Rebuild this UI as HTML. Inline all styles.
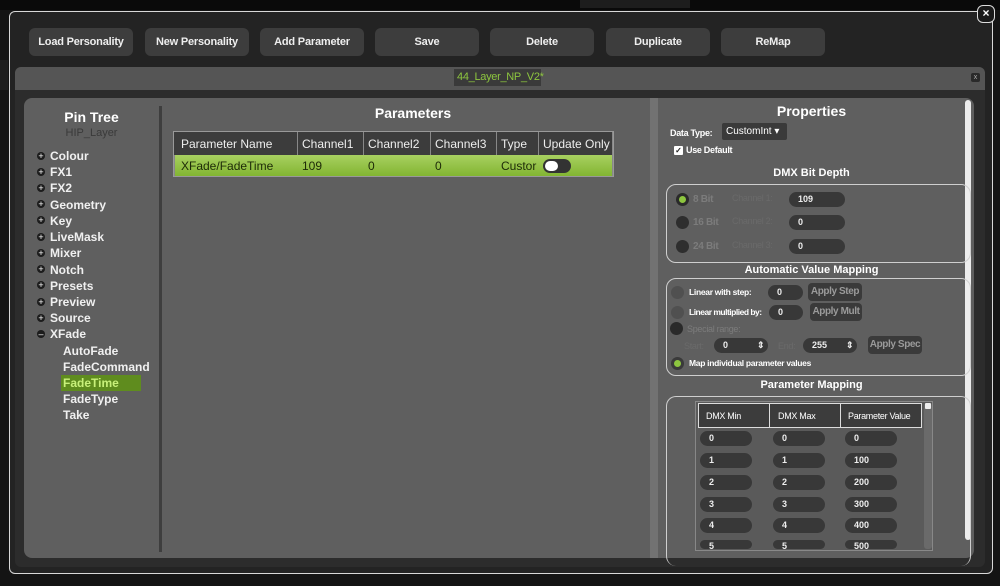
<!DOCTYPE html>
<html><head><meta charset="utf-8"><style>
*{margin:0;padding:0;box-sizing:border-box}
body{width:1000px;height:586px;background:#141414;position:relative;overflow:hidden;font-family:"Liberation Sans",sans-serif;color:#fff}
.a{position:absolute}
.btn{position:absolute;top:28px;height:28px;width:104px;background:#3d3d3d;border-radius:6px;font-size:11px;font-weight:bold;text-align:center;line-height:28px;color:#eee;letter-spacing:-0.2px}
.tree{position:absolute;font-size:12px;font-weight:bold;color:#f0f0f0}
.pl{position:absolute;left:37px;width:8px;height:8px;border-radius:50%;background:#1c1c1c;color:#fff;font-size:9px;line-height:8px;text-align:center}
.pill{position:absolute;height:15px;background:#383838;border-radius:8px;font-size:9px;font-weight:bold;color:#eee;padding-left:9px;line-height:15px;white-space:nowrap}
.rad{position:absolute;width:13px;height:13px;border-radius:50%;background:#2e2e2e}
.box{position:absolute;border:1px solid #cfcfcf;border-radius:10px}
.lbl{position:absolute;font-size:9px;font-weight:bold;white-space:nowrap;letter-spacing:-0.3px}
.dim{color:#7c7c7c}
.abtn{position:absolute;height:18px;background:#3a3a3a;border-radius:4px;font-size:10px;font-weight:bold;color:#9a9a9a;text-align:center;line-height:18px;white-space:nowrap;letter-spacing:-0.4px}
</style></head><body>
<div class="a" style="left:0;top:0;width:1000px;height:10px;background:#0a0a0a"></div>
<div class="a" style="left:580px;top:0;width:110px;height:8px;background:#1d1d1d"></div>
<div class="a" style="left:0;top:60px;width:8px;height:30px;background:#1e1e1e"></div>
<div class="a" style="left:9px;top:11px;width:984px;height:563px;border:1px solid #d8d8d8;border-radius:6px;background:#232323"></div>
<div class="a" style="left:977px;top:5px;width:18px;height:18px;border:1.5px solid #ddd;border-radius:6px;background:#1a1a1a;font-size:12px;text-align:center;line-height:15px;font-weight:bold">×</div>
<div class="btn" style="left:29px">Load Personality</div>
<div class="btn" style="left:145px">New Personality</div>
<div class="btn" style="left:260px">Add Parameter</div>
<div class="btn" style="left:375px">Save</div>
<div class="btn" style="left:490px">Delete</div>
<div class="btn" style="left:606px">Duplicate</div>
<div class="btn" style="left:721px">ReMap</div>
<div class="a" style="left:15px;top:67px;width:970px;height:500px;background:#2c2c2c;border-radius:6px"></div>
<div class="a" style="left:15px;top:67px;width:970px;height:23px;background:#555;border-radius:6px 6px 0 0"></div>
<div class="a" style="left:454px;top:69px;width:87px;height:17px;background:#3a3a3a;color:#8dc63f;font-size:11px;line-height:17px;padding-left:3px;white-space:nowrap;letter-spacing:-0.3px">44_Layer_NP_V2*</div>
<div class="a" style="left:971px;top:73px;width:9px;height:9px;background:#2a2a2a;border-radius:2px;font-size:7px;line-height:9px;text-align:center;color:#aaa">x</div>
<div class="a" style="left:24px;top:98px;width:950px;height:460px;background:#5f5f5f;border-radius:8px"></div>
<div class="a" style="left:159px;top:106px;width:3px;height:446px;background:#3e3e3e"></div>
<div class="a" style="left:650px;top:98px;width:8px;height:460px;background:#727272"></div>
<div class="a" style="left:965px;top:100px;width:6px;height:440px;background:#ececec;border-radius:3px"></div>
<div class="a" style="left:24px;top:109px;width:135px;text-align:center;font-size:14px;font-weight:bold">Pin Tree</div>
<div class="a" style="left:24px;top:127px;width:135px;text-align:center;font-size:11px;color:#3a3a3a">HIP_Layer</div>
<div class="pl" style="top:152px">+</div><div class="tree" style="left:50px;top:149px">Colour</div>
<div class="pl" style="top:168px">+</div><div class="tree" style="left:50px;top:165px">FX1</div>
<div class="pl" style="top:184px">+</div><div class="tree" style="left:50px;top:181px">FX2</div>
<div class="pl" style="top:200px">+</div><div class="tree" style="left:50px;top:198px">Geometry</div>
<div class="pl" style="top:216px">+</div><div class="tree" style="left:50px;top:214px">Key</div>
<div class="pl" style="top:233px">+</div><div class="tree" style="left:50px;top:230px">LiveMask</div>
<div class="pl" style="top:249px">+</div><div class="tree" style="left:50px;top:246px">Mixer</div>
<div class="pl" style="top:265px">+</div><div class="tree" style="left:50px;top:263px">Notch</div>
<div class="pl" style="top:281px">+</div><div class="tree" style="left:50px;top:279px">Presets</div>
<div class="pl" style="top:298px">+</div><div class="tree" style="left:50px;top:295px">Preview</div>
<div class="pl" style="top:314px">+</div><div class="tree" style="left:50px;top:311px">Source</div>
<div class="pl" style="top:330px">–</div><div class="tree" style="left:50px;top:327px">XFade</div>
<div class="tree" style="left:63px;top:344px">AutoFade</div>
<div class="tree" style="left:63px;top:360px">FadeCommand</div>
<div class="a" style="left:61px;top:375px;width:80px;height:16px;background:#5f8c1e"></div>
<div class="tree" style="left:63px;top:376px;color:#c8f07a">FadeTime</div>
<div class="tree" style="left:63px;top:392px">FadeType</div>
<div class="tree" style="left:63px;top:408px">Take</div>
<div class="a" style="left:163px;top:105px;width:500px;text-align:center;font-size:14px;font-weight:bold">Parameters</div>
<div class="a" style="left:173px;top:131px;width:441px;height:46px;background:#888;border:1px solid #999"></div>
<div class="a" style="left:174px;top:132px;width:438px;height:23px;background:#3c3c3c"></div>
<div class="a" style="left:175px;top:155px;width:437px;height:21px;background:linear-gradient(#a8d060,#82b532)"></div>
<div class="a" style="left:174px;top:132px;width:439px;font-size:12px;color:#eee">
<span class="a" style="left:7px;top:5px;white-space:nowrap">Parameter Name</span>
<span class="a" style="left:123px;top:0;width:1px;height:23px;background:#888"></span>
<span class="a" style="left:128px;top:5px">Channel1</span>
<span class="a" style="left:189px;top:0;width:1px;height:23px;background:#888"></span>
<span class="a" style="left:194px;top:5px">Channel2</span>
<span class="a" style="left:256px;top:0;width:1px;height:23px;background:#888"></span>
<span class="a" style="left:261px;top:5px">Channel3</span>
<span class="a" style="left:322px;top:0;width:1px;height:23px;background:#888"></span>
<span class="a" style="left:327px;top:5px">Type</span>
<span class="a" style="left:364px;top:0;width:1px;height:23px;background:#888"></span>
<span class="a" style="left:369px;top:5px;white-space:nowrap">Update Only</span>
</div>
<div class="a" style="left:174px;top:155px;width:439px;font-size:12px;color:#1d2a08">
<span class="a" style="left:7px;top:4px;white-space:nowrap">XFade/FadeTime</span>
<span class="a" style="left:128px;top:4px">109</span>
<span class="a" style="left:194px;top:4px">0</span>
<span class="a" style="left:261px;top:4px">0</span>
<span class="a" style="left:327px;top:4px">Custor</span>
</div>
<div class="a" style="left:543px;top:159px;width:28px;height:14px;background:#333;border-radius:7px"><div class="a" style="left:2px;top:2px;width:13px;height:10px;background:#fff;border-radius:5px"></div></div>
<div class="a" style="left:658px;top:103px;width:307px;text-align:center;font-size:14px;font-weight:bold">Properties</div>
<div class="lbl" style="left:670px;top:128px">Data Type:</div>
<div class="a" style="left:722px;top:123px;width:65px;height:17px;background:#3a3a3a;border-radius:2px;font-size:10px;line-height:17px;padding-left:4px;white-space:nowrap">CustomInt ▾</div>
<div class="a" style="left:674px;top:146px;width:9px;height:9px;background:#fff;border-radius:1px;font-size:8px;color:#222;line-height:9px;text-align:center;font-weight:bold">✓</div>
<div class="lbl" style="left:686px;top:145px">Use Default</div>
<div class="a" style="left:658px;top:167px;width:307px;text-align:center;font-size:11px;font-weight:bold">DMX Bit Depth</div>
<div class="box" style="left:666px;top:184px;width:305px;height:79px"></div>
<div class="rad" style="left:676px;top:193px;background:#2a2a2a"><div class="a" style="left:3px;top:3px;width:7px;height:7px;border-radius:50%;background:#8dc63f"></div></div>
<div class="lbl dim" style="left:693px;top:194px;font-size:10px">8 Bit</div>
<div class="rad" style="left:676px;top:216px"></div><div class="lbl dim" style="left:693px;top:217px;font-size:10px">16 Bit</div>
<div class="rad" style="left:676px;top:240px"></div><div class="lbl dim" style="left:693px;top:241px;font-size:10px">24 Bit</div>
<div class="lbl" style="left:732px;top:193px;color:#6a6a6a;font-weight:normal">Channel 1:</div>
<div class="lbl" style="left:732px;top:216px;color:#6a6a6a;font-weight:normal">Channel 2:</div>
<div class="lbl" style="left:732px;top:240px;color:#6a6a6a;font-weight:normal">Channel 3:</div>
<div class="pill" style="left:789px;top:192px;width:56px">109</div>
<div class="pill" style="left:789px;top:215px;width:56px">0</div>
<div class="pill" style="left:789px;top:239px;width:56px">0</div>
<div class="a" style="left:658px;top:264px;width:307px;text-align:center;font-size:11px;font-weight:bold">Automatic Value Mapping</div>
<div class="box" style="left:666px;top:278px;width:305px;height:98px"></div>
<div class="rad" style="left:671px;top:286px;background:#505050"></div><div class="lbl" style="left:689px;top:287px;font-size:8.5px">Linear with step:</div>
<div class="pill" style="left:768px;top:285px;width:35px">0</div>
<div class="abtn" style="left:808px;top:283px;width:54px">Apply Step</div>
<div class="rad" style="left:671px;top:306px;background:#505050"></div><div class="lbl" style="left:689px;top:307px;font-size:8.5px;letter-spacing:-0.5px">Linear multiplied by:</div>
<div class="pill" style="left:769px;top:305px;width:34px">0</div>
<div class="abtn" style="left:810px;top:303px;width:52px">Apply Mult</div>
<div class="rad" style="left:670px;top:322px;background:#2a2a2a"></div><div class="lbl dim" style="left:687px;top:324px;font-weight:normal">Special range:</div>
<div class="lbl" style="left:684px;top:341px;color:#6a6a6a;font-weight:normal">Start:</div>
<div class="pill" style="left:714px;top:338px;width:54px">0<span class="a" style="left:43px;top:0">⇕</span></div>
<div class="lbl" style="left:778px;top:341px;color:#6a6a6a;font-weight:normal">End:</div>
<div class="pill" style="left:803px;top:338px;width:54px">255<span class="a" style="left:43px;top:0">⇕</span></div>
<div class="abtn" style="left:868px;top:336px;width:54px">Apply Spec</div>
<div class="rad" style="left:671px;top:357px;background:#3a3a3a"><div class="a" style="left:3px;top:3px;width:7px;height:7px;border-radius:50%;background:#8dc63f"></div></div>
<div class="lbl" style="left:689px;top:358px;font-size:8.5px">Map individual parameter values</div>
<div class="a" style="left:658px;top:379px;width:307px;text-align:center;font-size:11px;font-weight:bold">Parameter Mapping</div>
<div class="box" style="left:666px;top:396px;width:305px;height:170px;border-bottom:none"></div>
<div class="a" style="left:695px;top:401px;width:238px;height:150px;border:1px solid #888;background:#5a5a5a;overflow:hidden">
<div class="a" style="left:2px;top:1px;width:224px;height:25px;background:#3c3c3c;border:1px solid #ddd"></div>
<div class="a" style="left:73px;top:1px;width:1px;height:25px;background:#ddd"></div>
<div class="a" style="left:144px;top:1px;width:1px;height:25px;background:#ddd"></div>
<div class="lbl" style="left:10px;top:9px;font-weight:normal">DMX Min</div>
<div class="lbl" style="left:82px;top:9px;font-weight:normal">DMX Max</div>
<div class="lbl" style="left:152px;top:9px;font-weight:normal">Parameter Value</div>
<div class="a" style="left:228px;top:1px;width:8px;height:146px;background:#6a6a6a;border-radius:3px"></div>
<div class="a" style="left:229px;top:1px;width:6px;height:6px;background:#eee;border-radius:1px"></div>
</div>
<div class="pill" style="left:700px;top:431px;width:52px">0</div><div class="pill" style="left:773px;top:431px;width:52px">0</div><div class="pill" style="left:845px;top:431px;width:52px">0</div>
<div class="pill" style="left:700px;top:453px;width:52px">1</div><div class="pill" style="left:773px;top:453px;width:52px">1</div><div class="pill" style="left:845px;top:453px;width:52px">100</div>
<div class="pill" style="left:700px;top:475px;width:52px">2</div><div class="pill" style="left:773px;top:475px;width:52px">2</div><div class="pill" style="left:845px;top:475px;width:52px">200</div>
<div class="pill" style="left:700px;top:497px;width:52px">3</div><div class="pill" style="left:773px;top:497px;width:52px">3</div><div class="pill" style="left:845px;top:497px;width:52px">300</div>
<div class="pill" style="left:700px;top:518px;width:52px">4</div><div class="pill" style="left:773px;top:518px;width:52px">4</div><div class="pill" style="left:845px;top:518px;width:52px">400</div>
<div class="pill" style="left:700px;top:540px;width:52px;height:9px;line-height:12px;overflow:hidden">5</div><div class="pill" style="left:773px;top:540px;width:52px;height:9px;line-height:12px;overflow:hidden">5</div><div class="pill" style="left:845px;top:540px;width:52px;height:9px;line-height:12px;overflow:hidden">500</div>
</body></html>
